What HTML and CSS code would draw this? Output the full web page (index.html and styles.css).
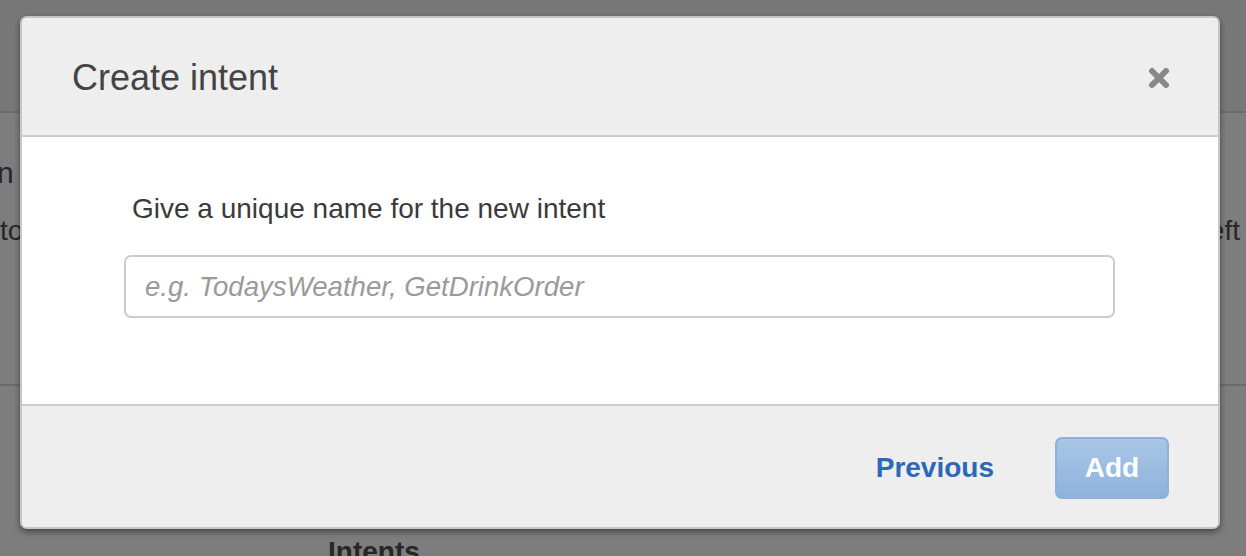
FILE: index.html
```html
<!DOCTYPE html>
<html lang="en">
<head>
<meta charset="utf-8">
<title>Create intent</title>
<link rel="stylesheet" href="styles.css">
</head>
<body>
<div class="page">
  <header class="page-header"></header>
  <section class="intro">
    <h2 class="intro-title">n y</h2>
    <div class="intro-row">
      <span>to</span>
      <span>left</span>
    </div>
  </section>
  <section class="content">
    <h3 class="content-title">Intents</h3>
  </section>
</div>

<div class="modal" role="dialog" aria-labelledby="modal-title">
  <div class="modal-header">
    <h1 class="modal-title" id="modal-title">Create intent</h1>
    <button class="close" aria-label="Close">
      <svg width="22" height="22" viewBox="0 0 22 22" aria-hidden="true">
        <path d="M4 4 L18 18 M18 4 L4 18" stroke="#888888" stroke-width="6" stroke-linecap="round" fill="none"/>
      </svg>
    </button>
  </div>
  <div class="modal-body">
    <label class="field-label" for="intent-name">Give a unique name for the new intent</label>
    <input class="field-input" id="intent-name" type="text" placeholder="e.g. TodaysWeather, GetDrinkOrder">
  </div>
  <div class="modal-footer">
    <button class="btn-link">Previous</button>
    <button class="btn-primary">Add</button>
  </div>
</div>
</body>
</html>
```

FILE: styles.css
```css
* { box-sizing: border-box; }

html, body {
  margin: 0;
  padding: 0;
}

body {
  width: 1246px;
  height: 556px;
  overflow: hidden;
  font-family: "Liberation Sans", Arial, sans-serif;
  background: #7d7d7d;
  position: relative;
}

.page {
  display: flex;
  flex-direction: column;
}

.page-header {
  height: 113px;
  background: #787878;
  border-bottom: 2px solid #6b6b6b;
}

.intro {
  height: 273px;
  border-bottom: 2px solid #6b6b6b;
  padding-top: 40px;
  color: #262626;
}

.intro-title {
  margin: 0;
  font-size: 30px;
  font-weight: normal;
  line-height: 40px;
  white-space: nowrap;
  text-indent: -3px;
}

.intro-row {
  display: flex;
  justify-content: space-between;
  margin-top: 18px;
  padding-right: 6px;
  font-size: 28px;
  line-height: 40px;
  white-space: nowrap;
}

.content {
  padding: 150px 0 0 328px;
}

.content-title {
  margin: 0;
  font-size: 28px;
  font-weight: bold;
  color: #262626;
  line-height: 32px;
}

/* Modal */
.modal {
  position: absolute;
  top: 16px;
  left: 20px;
  width: 1200px;
  height: 513px;
  border: 2px solid #c6c6c6;
  border-radius: 7px;
  background: #ffffff;
  box-shadow: 0 3px 6px rgba(0, 0, 0, 0.45);
  display: flex;
  flex-direction: column;
  overflow: hidden;
}

.modal-header {
  height: 119px;
  flex: none;
  background: #eeeeee;
  border-bottom: 2px solid #cccccc;
  display: flex;
  align-items: center;
  justify-content: space-between;
  padding: 2px 48px 0 50px;
}

.modal-title {
  margin: 0;
  font-size: 36px;
  font-weight: normal;
  color: #444444;
  line-height: 40px;
}

.close {
  border: none;
  background: none;
  padding: 0;
  width: 22px;
  height: 22px;
  display: flex;
  cursor: pointer;
}

.modal-body {
  height: 267px;
  flex: none;
  padding: 52px 103px 0 102px;
  display: flex;
  flex-direction: column;
}

.field-label {
  padding-left: 8px;
  font-size: 28px;
  line-height: 40px;
  color: #3a3a3a;
}

.field-input {
  margin-top: 26px;
  width: 100%;
  height: 63px;
  border: 2px solid #cccccc;
  border-radius: 7px;
  padding: 0 19px;
  font-family: "Liberation Sans", Arial, sans-serif;
  font-size: 27.6px;
  color: #333333;
  outline: none;
}

.field-input::placeholder {
  color: #9a9a9a;
  font-style: italic;
}

.modal-footer {
  flex: 1;
  background: #eeeeee;
  border-top: 2px solid #cccccc;
  display: flex;
  align-items: center;
  justify-content: flex-end;
  gap: 61px;
  padding: 2px 49px 0 0;
}

.btn-link {
  border: none;
  background: none;
  padding: 0;
  font-family: "Liberation Sans", Arial, sans-serif;
  font-size: 28px;
  font-weight: bold;
  color: #2b68b9;
  cursor: pointer;
}

.btn-primary {
  width: 114px;
  height: 62px;
  border: 2px solid #8eb0d9;
  border-radius: 7px;
  background: linear-gradient(#a9c6e6, #8fb2dc);
  font-family: "Liberation Sans", Arial, sans-serif;
  font-size: 28px;
  font-weight: bold;
  color: #ffffff;
  cursor: pointer;
}
```
